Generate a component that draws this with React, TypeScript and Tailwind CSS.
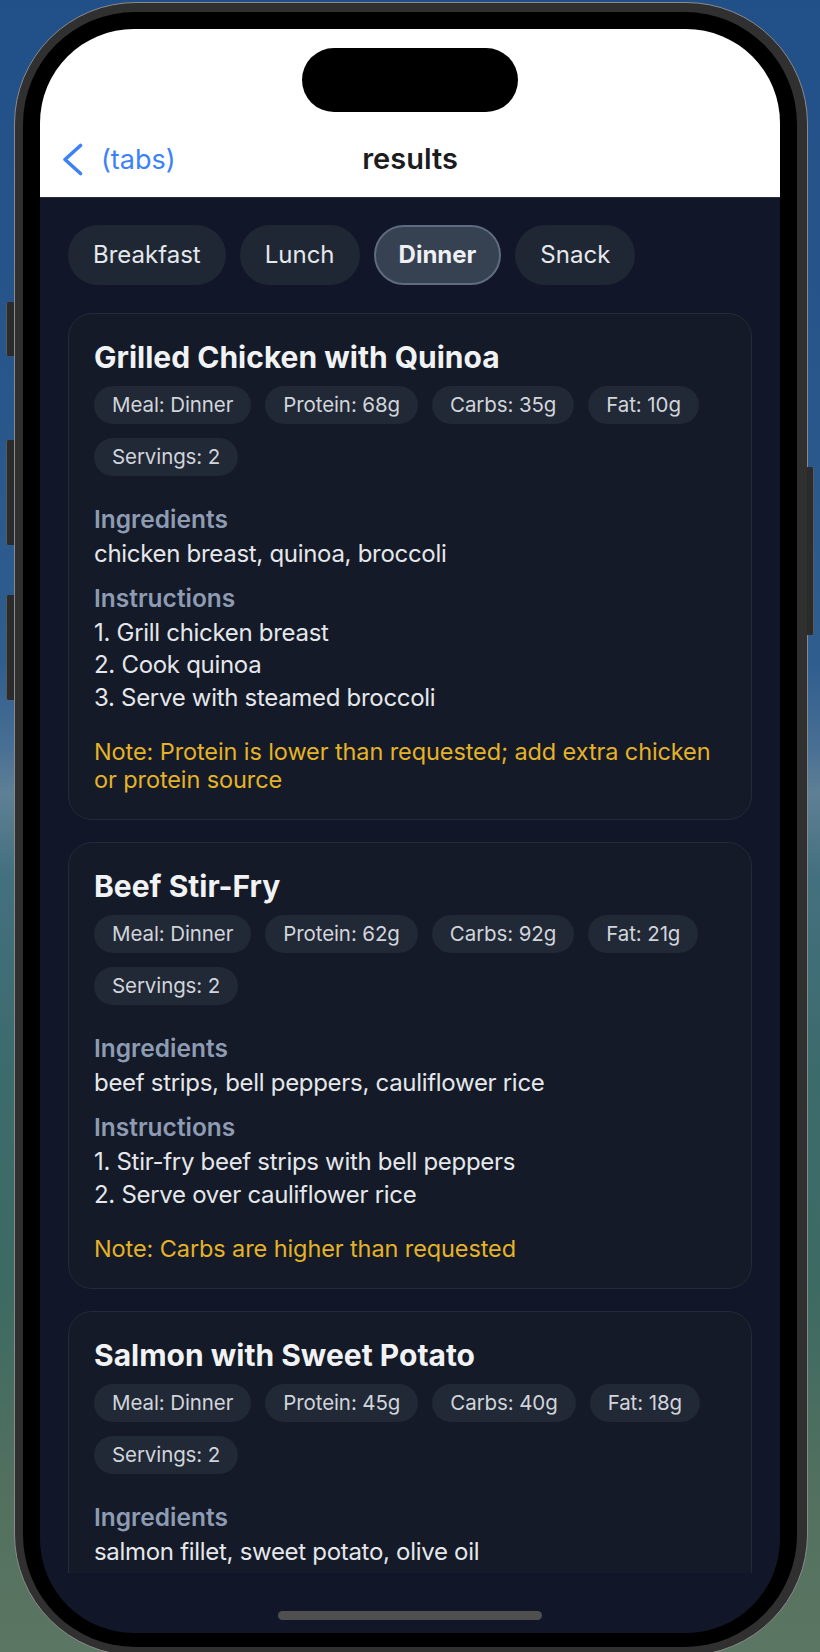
import React from "react";

type Meal = {
  title: string;
  protein: string;
  carbs: string;
  fat: string;
  ingredients: string;
  steps: string[];
  note?: string;
};

const meals: Meal[] = [
  {
    title: "Grilled Chicken with Quinoa",
    protein: "68g",
    carbs: "35g",
    fat: "10g",
    ingredients: "chicken breast, quinoa, broccoli",
    steps: ["1. Grill chicken breast", "2. Cook quinoa", "3. Serve with steamed broccoli"],
    note: "Note: Protein is lower than requested; add extra chicken or protein source",
  },
  {
    title: "Beef Stir-Fry",
    protein: "62g",
    carbs: "92g",
    fat: "21g",
    ingredients: "beef strips, bell peppers, cauliflower rice",
    steps: ["1. Stir-fry beef strips with bell peppers", "2. Serve over cauliflower rice"],
    note: "Note: Carbs are higher than requested",
  },
  {
    title: "Salmon with Sweet Potato",
    protein: "45g",
    carbs: "40g",
    fat: "18g",
    ingredients: "salmon fillet, sweet potato, olive oil",
    steps: ["1. Bake salmon fillet", "2. Roast sweet potato with olive oil"],
  },
];

const tabs = ["Breakfast", "Lunch", "Dinner", "Snack"];

function Chip({ children }: { children: React.ReactNode }) {
  return (
    <span className="flex h-[38px] items-center rounded-full bg-[#212836] px-[18px] text-[20.5px] tracking-[-0.1px] text-[#d1d5db]">
      {children}
    </span>
  );
}

function MealCard({ meal }: { meal: Meal }) {
  return (
    <div className="shrink-0 rounded-[24px] border border-[#232a38] bg-[#141a27] p-[25px]">
      <h2 className="text-[30px] font-bold leading-[36px] text-[#f1f2f4]">{meal.title}</h2>
      <div className="mt-[11px] flex flex-wrap gap-[14px]">
        <Chip>Meal: Dinner</Chip>
        <Chip>Protein: {meal.protein}</Chip>
        <Chip>Carbs: {meal.carbs}</Chip>
        <Chip>Fat: {meal.fat}</Chip>
        <Chip>Servings: 2</Chip>
      </div>

      <h3 className="mt-[28px] text-[24.5px] font-semibold leading-[30px] text-[#8d9bb3]">Ingredients</h3>
      <p className="mt-[4px] text-[24px] leading-[32px] tracking-[-0.3px] text-[#e5e7eb]">{meal.ingredients}</p>

      <h3 className="mt-[13px] text-[24.5px] font-semibold leading-[30px] text-[#8d9bb3]">Instructions</h3>
      <div className="mt-[4px] text-[24px] leading-[32.3px] tracking-[-0.3px] text-[#e5e7eb]">
        {meal.steps.map((s) => (
          <p key={s}>{s}</p>
        ))}
      </div>

      {meal.note ? (
        <p className="mt-[24px] text-[23.5px] leading-[28.3px] tracking-[-0.1px] text-[#e5b327]">{meal.note}</p>
      ) : null}
    </div>
  );
}

export default function App() {
  return (
    <div
      className="relative h-[1652px] w-[820px] overflow-hidden bg-[linear-gradient(180deg,#214f88_0%,#29578b_25%,#2e5d8e_40%,#4a7094_45.5%,#5f8095_48%,#43707e_53%,#3c6b6c_65%,#3d6a62_78%,#52705f_90%,#5b7662_100%)] pl-[14px] pt-[2px]"
      style={{ fontFamily: "Inter, 'Noto Sans', sans-serif" }}
    >
      {/* side buttons */}
      <span className="absolute left-[6px] top-[302px] h-[54px] w-[8px] rounded-l-[2px] border-l border-[#5a5a5a] bg-[#2b2b2b]" />
      <span className="absolute left-[6px] top-[440px] h-[105px] w-[8px] rounded-l-[2px] border-l border-[#5a5a5a] bg-[#2b2b2b]" />
      <span className="absolute left-[6px] top-[595px] h-[105px] w-[8px] rounded-l-[2px] border-l border-[#5a5a5a] bg-[#2b2b2b]" />
      <span className="absolute left-[807px] top-[467px] h-[168px] w-[7px] rounded-r-[2px] border-r border-[#5a5a5a] bg-[#2b2b2b]" />

      {/* phone */}
      <div className="w-[794px] rounded-[122px] border border-[#8a8a8a] bg-[#303030] pb-[8px] pl-[8px] pr-[10px] pt-[9px]">
        <div className="rounded-[112px] bg-black px-[17px] pb-[14px] pt-[17px]">
          <div className="flex h-[1604px] w-[740px] flex-col overflow-hidden rounded-[94px] bg-[#111728]">
            {/* header */}
            <div className="flex h-[168px] shrink-0 flex-col bg-white">
              <div className="flex h-[92px] justify-center pt-[19px]">
                <div className="h-[64px] w-[216px] rounded-full bg-black" />
              </div>
              <div className="grid h-[76px] grid-cols-[1fr_auto_1fr] items-center px-[22px]">
                <div className="flex items-center gap-[18px] text-[#3b82f6]">
                  <svg width="21" height="33" viewBox="0 0 21 33" fill="none">
                    <path d="M18.5 2.5 L3 16.5 L18.5 30.5" stroke="#3b82f6" strokeWidth="3.6" strokeLinecap="round" strokeLinejoin="round" />
                  </svg>
                  <span className="text-[27px] leading-none">(tabs)</span>
                </div>
                <div className="text-[29px] font-semibold text-[#1c1c1e]">results</div>
                <div />
              </div>
            </div>

            {/* scroll content */}
            <div className="flex min-h-0 flex-1 flex-col overflow-hidden border-t border-[#2a2f3a] px-[28px] pt-[27px]">
              <div className="flex shrink-0 gap-[14px]">
                {tabs.map((t) =>
                  t === "Dinner" ? (
                    <span
                      key={t}
                      className="flex h-[60px] items-center rounded-full border-2 border-[#5f6b7f] bg-[#364152] px-[23px] text-[24px] font-bold text-[#eef0f3]"
                    >
                      {t}
                    </span>
                  ) : (
                    <span
                      key={t}
                      className="flex h-[60px] items-center rounded-full bg-[#1f2735] px-[25px] text-[24px] text-[#e5e7eb]"
                    >
                      {t}
                    </span>
                  )
                )}
              </div>

              <div className="mt-[28px] flex flex-col gap-[22px]">
                {meals.map((m) => (
                  <MealCard key={m.title} meal={m} />
                ))}
              </div>
            </div>

            {/* home indicator */}
            <div className="flex h-[60px] shrink-0 justify-center pt-[38px]">
              <div className="h-[9px] w-[264px] rounded-full bg-[#4f4f4f]" />
            </div>
          </div>
        </div>
      </div>
    </div>
  );
}
